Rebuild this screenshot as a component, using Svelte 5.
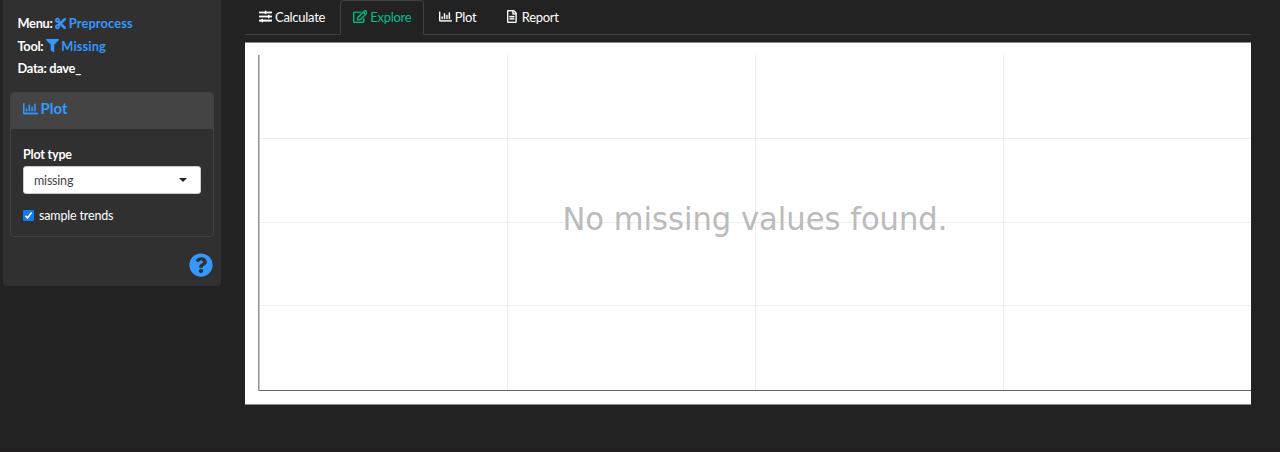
<script>
  const icons = {
    cut: { w: 448, d: 'M278.06 256L444.48 89.57c4.69-4.69 4.69-12.29 0-16.97-32.8-32.8-85.99-32.8-118.79 0L210.18 188.12l-24.86-24.86c4.31-10.92 6.68-22.81 6.68-35.26 0-53.02-42.98-96-96-96S0 74.98 0 128s42.98 96 96 96c4.54 0 8.99-.32 13.36-.93L142.29 256l-32.93 32.93c-4.37-.61-8.83-.93-13.36-.93-53.02 0-96 42.98-96 96s42.98 96 96 96 96-42.98 96-96c0-12.45-2.37-24.34-6.68-35.26l24.86-24.86L325.69 439.4c32.8 32.8 85.99 32.8 118.79 0 4.69-4.68 4.69-12.28 0-16.97L278.06 256zM96 160c-17.64 0-32-14.36-32-32s14.36-32 32-32 32 14.36 32 32-14.36 32-32 32zm0 256c-17.64 0-32-14.36-32-32s14.36-32 32-32 32 14.36 32 32-14.36 32-32 32z' },
    filter: { w: 512, d: 'M487.976 0H24.028C2.71 0-8.047 25.866 7.058 40.971L192 225.941V432c0 7.831 3.821 15.17 10.237 19.662l80 55.98C298.02 518.69 320 507.493 320 487.98V225.941l184.947-184.97C520.021 25.896 509.338 0 487.976 0z' },
    chart: { w: 512, d: 'M396.8 352h22.4c6.4 0 12.8-6.4 12.8-12.8V108.8c0-6.4-6.4-12.8-12.8-12.8h-22.4c-6.4 0-12.8 6.4-12.8 12.8v230.4c0 6.4 6.4 12.8 12.8 12.8zm-192 0h22.4c6.4 0 12.8-6.4 12.8-12.8V140.8c0-6.4-6.4-12.8-12.8-12.8h-22.4c-6.4 0-12.8 6.4-12.8 12.8v198.4c0 6.4 6.4 12.8 12.8 12.8zm96 0h22.4c6.4 0 12.8-6.4 12.8-12.8V204.8c0-6.4-6.4-12.8-12.8-12.8h-22.4c-6.4 0-12.8 6.4-12.8 12.8v134.4c0 6.4 6.4 12.8 12.8 12.8zM496 400H48V80c0-8.84-7.16-16-16-16H16C7.16 64 0 71.16 0 80v336c0 17.67 14.33 32 32 32h464c8.84 0 16-7.16 16-16v-16c0-8.84-7.16-16-16-16zm-387.2-48h22.4c6.4 0 12.8-6.4 12.8-12.8v-70.4c0-6.4-6.4-12.8-12.8-12.8h-22.4c-6.4 0-12.8 6.4-12.8 12.8v70.4c0 6.4 6.4 12.8 12.8 12.8z' },
    sliders: { w: 512, d: 'M496 384H160v-16c0-8.8-7.2-16-16-16h-32c-8.8 0-16 7.2-16 16v16H16c-8.8 0-16 7.2-16 16v32c0 8.8 7.2 16 16 16h80v16c0 8.8 7.2 16 16 16h32c8.8 0 16-7.2 16-16v-16h336c8.8 0 16-7.2 16-16v-32c0-8.8-7.2-16-16-16zm0-160h-80v-16c0-8.8-7.2-16-16-16h-32c-8.8 0-16 7.2-16 16v16H16c-8.8 0-16 7.2-16 16v32c0 8.8 7.2 16 16 16h336v16c0 8.8 7.2 16 16 16h32c8.8 0 16-7.2 16-16v-16h80c8.8 0 16-7.2 16-16v-32c0-8.8-7.2-16-16-16zm0-160H288V48c0-8.8-7.2-16-16-16h-32c-8.8 0-16 7.2-16 16v16H16C7.2 64 0 71.2 0 80v32c0 8.8 7.2 16 16 16h208v16c0 8.8 7.2 16 16 16h32c8.8 0 16-7.2 16-16v-16h208c8.8 0 16-7.2 16-16V80c0-8.8-7.2-16-16-16z' },
    edit: { w: 576, d: 'M402.3 344.9l32-32c5-5 13.7-1.5 13.7 5.7V464c0 26.5-21.5 48-48 48H48c-26.5 0-48-21.5-48-48V112c0-26.5 21.5-48 48-48h273.5c7.1 0 10.7 8.6 5.7 13.7l-32 32c-1.5 1.5-3.5 2.3-5.7 2.3H48v352h352V350.5c0-2.1.8-4.1 2.3-5.6zm156.6-201.8L296.3 405.7l-90.4 10c-26.2 2.9-48.5-19.2-45.6-45.6l10-90.4L432.9 17.1c22.9-22.9 59.9-22.9 82.7 0l43.2 43.2c22.9 22.9 22.9 60 .1 82.8zM460.1 174L402 115.9 216.2 301.8l-7.3 65.3 65.3-7.3L460.1 174zm64.8-79.7l-43.2-43.2c-4.1-4.1-10.8-4.1-14.8 0L436 82l58.1 58.1 30.9-30.9c4-4.2 4-10.8-.1-14.9z' },
    file: { w: 384, d: 'M288 248v28c0 6.6-5.4 12-12 12H108c-6.6 0-12-5.4-12-12v-28c0-6.6 5.4-12 12-12h168c6.6 0 12 5.4 12 12zm-12 72H108c-6.6 0-12 5.4-12 12v28c0 6.6 5.4 12 12 12h168c6.6 0 12-5.4 12-12v-28c0-6.6-5.4-12-12-12zm108-188.1V464c0 26.5-21.5 48-48 48H48c-26.5 0-48-21.5-48-48V48C0 21.5 21.5 0 48 0h204.1C264.8 0 277 5.1 286 14.1L369.9 98c9 8.9 14.1 21.2 14.1 33.9zm-128-80V128h76.1L256 51.9zM336 464V176H232c-13.3 0-24-10.7-24-24V48H48v416h288z' },
    help: { w: 512, d: 'M504 256c0 136.997-111.043 248-248 248S8 392.997 8 256C8 119.083 119.043 8 256 8s248 111.083 248 248zM262.655 90c-54.497 0-89.255 22.957-116.549 63.758-3.536 5.286-2.353 12.415 2.715 16.258l34.699 26.31c5.205 3.947 12.621 3.008 16.665-2.122 17.864-22.658 30.113-35.797 57.303-35.797 20.429 0 45.698 13.148 45.698 32.958 0 14.976-12.363 22.667-32.534 33.976C247.128 238.528 216 254.941 216 296v4c0 6.627 5.373 12 12 12h56c6.627 0 12-5.373 12-12v-1.333c0-28.462 83.186-29.647 83.186-106.667 0-58.002-60.165-102-116.531-102zM256 338c-25.365 0-46 20.635-46 46 0 25.364 20.635 46 46 46s46-20.636 46-46c0-25.364-20.635-46-46-46z' }
  };
  const tabs = [
    { label: 'Calculate', icon: 'sliders' },
    { label: 'Explore', icon: 'edit' },
    { label: 'Plot', icon: 'chart' },
    { label: 'Report', icon: 'file' }
  ];
  let active = $state('Explore');
  let trends = $state(true);
</script>

{#snippet glyph(name)}
  <svg class="icon {name}" viewBox="0 0 {icons[name].w} 512" aria-hidden="true"><path d={icons[name].d} /></svg>
{/snippet}

<div class="page">
  <aside>
    <div class="meta">
      <div>Menu:<a href="#menu">{@render glyph('cut')}<span>Preprocess</span></a></div>
      <div>Tool:<a href="#tool">{@render glyph('filter')}<span>Missing</span></a></div>
      <div>Data: dave_</div>
    </div>
    <section class="card">
      <header>{@render glyph('chart')}<span>Plot</span></header>
      <div class="body">
        <div class="label">Plot type</div>
        <div class="select"><span>missing</span><i></i></div>
        <button class="check" onclick={() => (trends = !trends)}>
          <svg viewBox="0 0 11 11"><rect width="11" height="11" rx="1" fill="#0d7bf7" />{#if trends}<path d="M2.4 5.7l2.1 2.2 4.1-5.5" fill="none" stroke="#fff" stroke-width="1.6" />{/if}</svg>
          <span>sample trends</span>
        </button>
      </div>
    </section>
    <a class="helplink" href="#help">{@render glyph('help')}</a>
  </aside>
  <main>
    <nav>
      {#each tabs as t}
        <button class="tab" class:active={active === t.label} onclick={() => (active = t.label)}>
          {@render glyph(t.icon)}<span>{t.label}</span>
        </button>
      {/each}
    </nav>
    <svg class="plot" viewBox="0 0 1006 363">
      <rect width="1006" height="363" fill="#fff" />
      <path d="M0 .5H1006M0 362.5H1006" stroke="#8a8a8a" fill="none" />
      <path d="M262.5 13V347M510.5 13V347M758.5 13V347M14 96.5H1006M14 180.5H1006M14 263.5H1006" stroke="#eee" fill="none" />
      <path d="M13.8 13V348" stroke="#777" stroke-width="1.2" fill="none" />
      <path d="M13.5 348.5H1006" stroke="#666" fill="none" />
      <text x="317.5" y="188" textLength="385" lengthAdjust="spacingAndGlyphs">No missing values found.</text>
    </svg>
  </main>
</div>

<style>
  :global(body) { margin: 0; background: #222; }
  .page { box-sizing: border-box; width: 1280px; height: 452px; display: flex; align-items: flex-start; padding-left: 3px; background: #222; border-bottom: 4px solid #231e20; font: 13px/20px Lato, sans-serif; color: #fff; overflow: hidden; }
  a { color: #3498ff; text-decoration: none; }
  button { font: inherit; letter-spacing: inherit; color: inherit; background: none; border: 0; margin: 0; padding: 0; }
  .icon { display: block; flex: none; fill: currentColor; height: 13px; }
  .icon path { stroke: currentColor; stroke-width: 10px; }
  aside { box-sizing: border-box; width: 218px; height: 286px; padding: 12px 7px 0; background: #303030; border-radius: 0 0 4px 4px; display: flex; flex-direction: column; }
  .meta { height: 80px; padding-left: 7.5px; font-weight: 700; font-size: 12.8px; letter-spacing: -.3px; line-height: 22.5px; }
  .meta div, .meta a { display: flex; align-items: center; white-space: pre; }
  .meta a { gap: 2.5px; margin-left: 2.5px; letter-spacing: .12px; }
  .card { box-sizing: border-box; width: 203.5px; height: 145px; border: 1px solid #414141; border-radius: 4px; overflow: hidden; }
  .card header { display: flex; align-items: center; gap: 2.5px; height: 36px; padding: 0 12px 6px; box-sizing: border-box; background: #444; color: #3498ff; font-size: 15px; font-weight: 700; }
  .card .chart { height: 15px; }
  .body { padding: 16px 12px 0; }
  .label { font-weight: 700; font-size: 12.5px; letter-spacing: -.2px; line-height: 20px; }
  .select { box-sizing: border-box; height: 28px; margin-top: 1px; padding: 1px 13px 0 10px; background: #fff; border: 1px solid #ccc; border-radius: 3px; color: #444; font-size: 12.5px; letter-spacing: -.2px; display: flex; align-items: center; justify-content: space-between; }
  .select i { border: 4px solid transparent; border-top: 4px solid #222; border-bottom: 0; margin-bottom: 2px; }
  .check { display: flex; align-items: center; gap: 5px; margin-top: 11px; font-size: 12.5px; letter-spacing: -.16px; }
  .check svg { width: 11px; height: 11px; }
  .check span { padding-top: 1px; }
  .helplink { align-self: flex-end; margin: 16px 1px 0 0; }
  .help { width: 24px; height: 24px; }
  .help path { stroke: none; }
  main { width: 1006px; margin-left: 24px; }
  nav { display: flex; height: 34px; padding-left: 1px; border-bottom: 1px solid #404040; letter-spacing: -.28px; }
  .tab { box-sizing: border-box; height: 35px; display: flex; align-items: center; gap: 3px; padding: 0 12px 2px; margin-right: 1.5px; border: 1px solid transparent; border-radius: 4px 4px 0 0; }
  .tab.active { color: #00bc8c; background: #222; border-color: #404040; border-bottom-color: #222; }
  .tab .file { margin: 0 1.5px 0 3.5px; }
  .plot { display: block; width: 1006px; height: 363px; margin-top: 7px; }
  .plot text { font: 32px "DejaVu Sans", Verdana, sans-serif; fill: #bbb; }
</style>
